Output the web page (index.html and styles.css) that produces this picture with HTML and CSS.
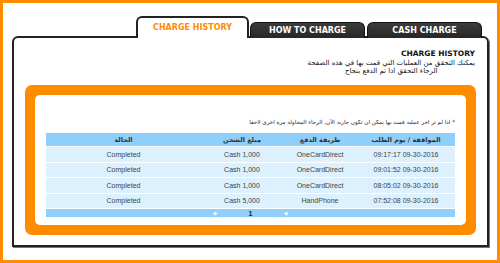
FILE: index.html
```html
<!DOCTYPE html>
<html lang="ar">
<head>
    <meta charset="UTF-8">
    <title>Charge History</title>
    <link rel="stylesheet" href="styles.css">
</head>
<body>
    <div class="page">
        <div class="tabs">
            <div class="tab active">CHARGE HISTORY</div>
            <div class="tab">HOW TO CHARGE</div>
            <div class="tab">CASH CHARGE</div>
        </div>
        <div class="panel">
            <div class="intro">
                <div class="intro-title">CHARGE HISTORY</div>
                <div class="intro-text" dir="rtl">
                    يمكنك التحقق من العمليات التي قمت بها في هذه الصفحة<br>
                    الرجاء التحقق اذا تم الدفع بنجاح
                </div>
            </div>
            <div class="orange-box">
                <div class="box-inner">
                    <div class="note" dir="rtl">* اذا لم تر اخر عملية قمت بها يمكن ان تكون جارية الآن, الرجاء المحاولة مرة اخرى لاحقا</div>
                    <table class="history">
                        <thead>
                            <tr>
                                <th>الحالة</th>
                                <th class="col-amount">مبلغ الشحن</th>
                                <th class="col-method">طريقة الدفع</th>
                                <th class="col-date">الموافقة / يوم الطلب</th>
                            </tr>
                        </thead>
                        <tbody>
                            <tr><td>Completed</td><td>Cash 1,000</td><td>OneCardDirect</td><td>09:17:17 09-30-2016</td></tr>
                            <tr><td>Completed</td><td>Cash 1,000</td><td>OneCardDirect</td><td>09:01:52 09-30-2016</td></tr>
                            <tr><td>Completed</td><td>Cash 1,000</td><td>OneCardDirect</td><td>08:05:02 09-30-2016</td></tr>
                            <tr><td>Completed</td><td>Cash 5,000</td><td>HandPhone</td><td>07:52:08 09-30-2016</td></tr>
                        </tbody>
                    </table>
                    <div class="pager">
                        <span class="arrow">&#9654;</span>
                        <span class="page-num">1</span>
                        <span class="arrow">&#9664;</span>
                    </div>
                </div>
            </div>
        </div>
    </div>
</body>
</html>
```

FILE: styles.css
```css
body {
    margin: 0;
    font-family: "Liberation Sans", "DejaVu Sans", sans-serif;
    background-color: #fff;
}
.page {
    width: 500px;
    height: 263px;
    box-sizing: border-box;
    border: 3px solid #ff8c00;
    padding: 13px 8px 0 9px;
}
.tabs {
    display: flex;
    align-items: flex-end;
    padding-left: 124px;
    position: relative;
    z-index: 1;
    margin-bottom: -2px;
}
.tab {
    width: 115px;
    height: 16px;
    box-sizing: border-box;
    background: linear-gradient(#3c3c3c, #262626);
    border: 1px solid #111;
    border-bottom: none;
    border-radius: 6px 6px 0 0;
    color: #fff;
    font-family: "DejaVu Sans", sans-serif;
    font-size: 8px;
    font-weight: bold;
    display: flex;
    align-items: center;
    justify-content: center;
    margin-right: 2px;
}
.tab.active {
    width: 113px;
    height: 22px;
    background: #fff;
    border: 2px solid #222;
    border-bottom: none;
    color: #ff8c00;
    margin-right: 1px;
    padding-bottom: 2px;
}
.panel {
    height: 211px;
    box-sizing: border-box;
    border: 2px solid #222;
    border-radius: 6px 6px 0 0;
    box-shadow: 1px 1px 0 #777;
    padding: 11px 11px 0 11px;
}
.intro {
    text-align: right;
    padding-right: 1px;
    color: #111;
}
.intro-title {
    font-family: "DejaVu Sans", sans-serif;
    font-size: 7.5px;
    font-weight: bold;
    line-height: 10px;
}
.intro-text {
    width: fit-content;
    margin-left: auto;
    font-family: "DejaVu Sans", sans-serif;
    font-size: 7px;
    line-height: 8px;
    text-align: center;
}
.orange-box {
    margin-top: 10px;
    border: 10px solid #ff8c00;
    border-radius: 7px;
    background: #ff8c00;
}
.box-inner {
    background: #fff;
    border-radius: 5px;
    padding: 23px 11px 8px 11px;
}
.note {
    font-family: "DejaVu Sans", sans-serif;
    font-size: 5.6px;
    line-height: 9px;
    color: #222;
    white-space: nowrap;
    margin-bottom: 6px;
}
.history {
    width: 100%;
    border-collapse: collapse;
    font-size: 7px;
    color: #444;
}
.history th {
    background-color: #8ecffb;
    height: 13px;
    padding: 0;
    font-family: "DejaVu Sans", sans-serif;
    font-size: 6.5px;
    font-weight: bold;
    color: #333;
}
.history td {
    background-color: #dcf0fd;
    height: 14.5px;
    padding: 0;
    text-align: center;
    border-top: 1px solid #fff;
}
.col-date {
    width: 98px;
}
.col-method {
    width: 74px;
}
.col-amount {
    width: 82px;
}
.pager {
    background-color: #8ecffb;
    height: 8px;
    display: flex;
    justify-content: center;
    align-items: center;
    gap: 31px;
    border-top: 1px solid #fff;
    font-size: 7px;
}
.arrow {
    color: #fff;
    font-size: 5px;
}
.page-num {
    font-weight: bold;
    color: #222;
}
```
